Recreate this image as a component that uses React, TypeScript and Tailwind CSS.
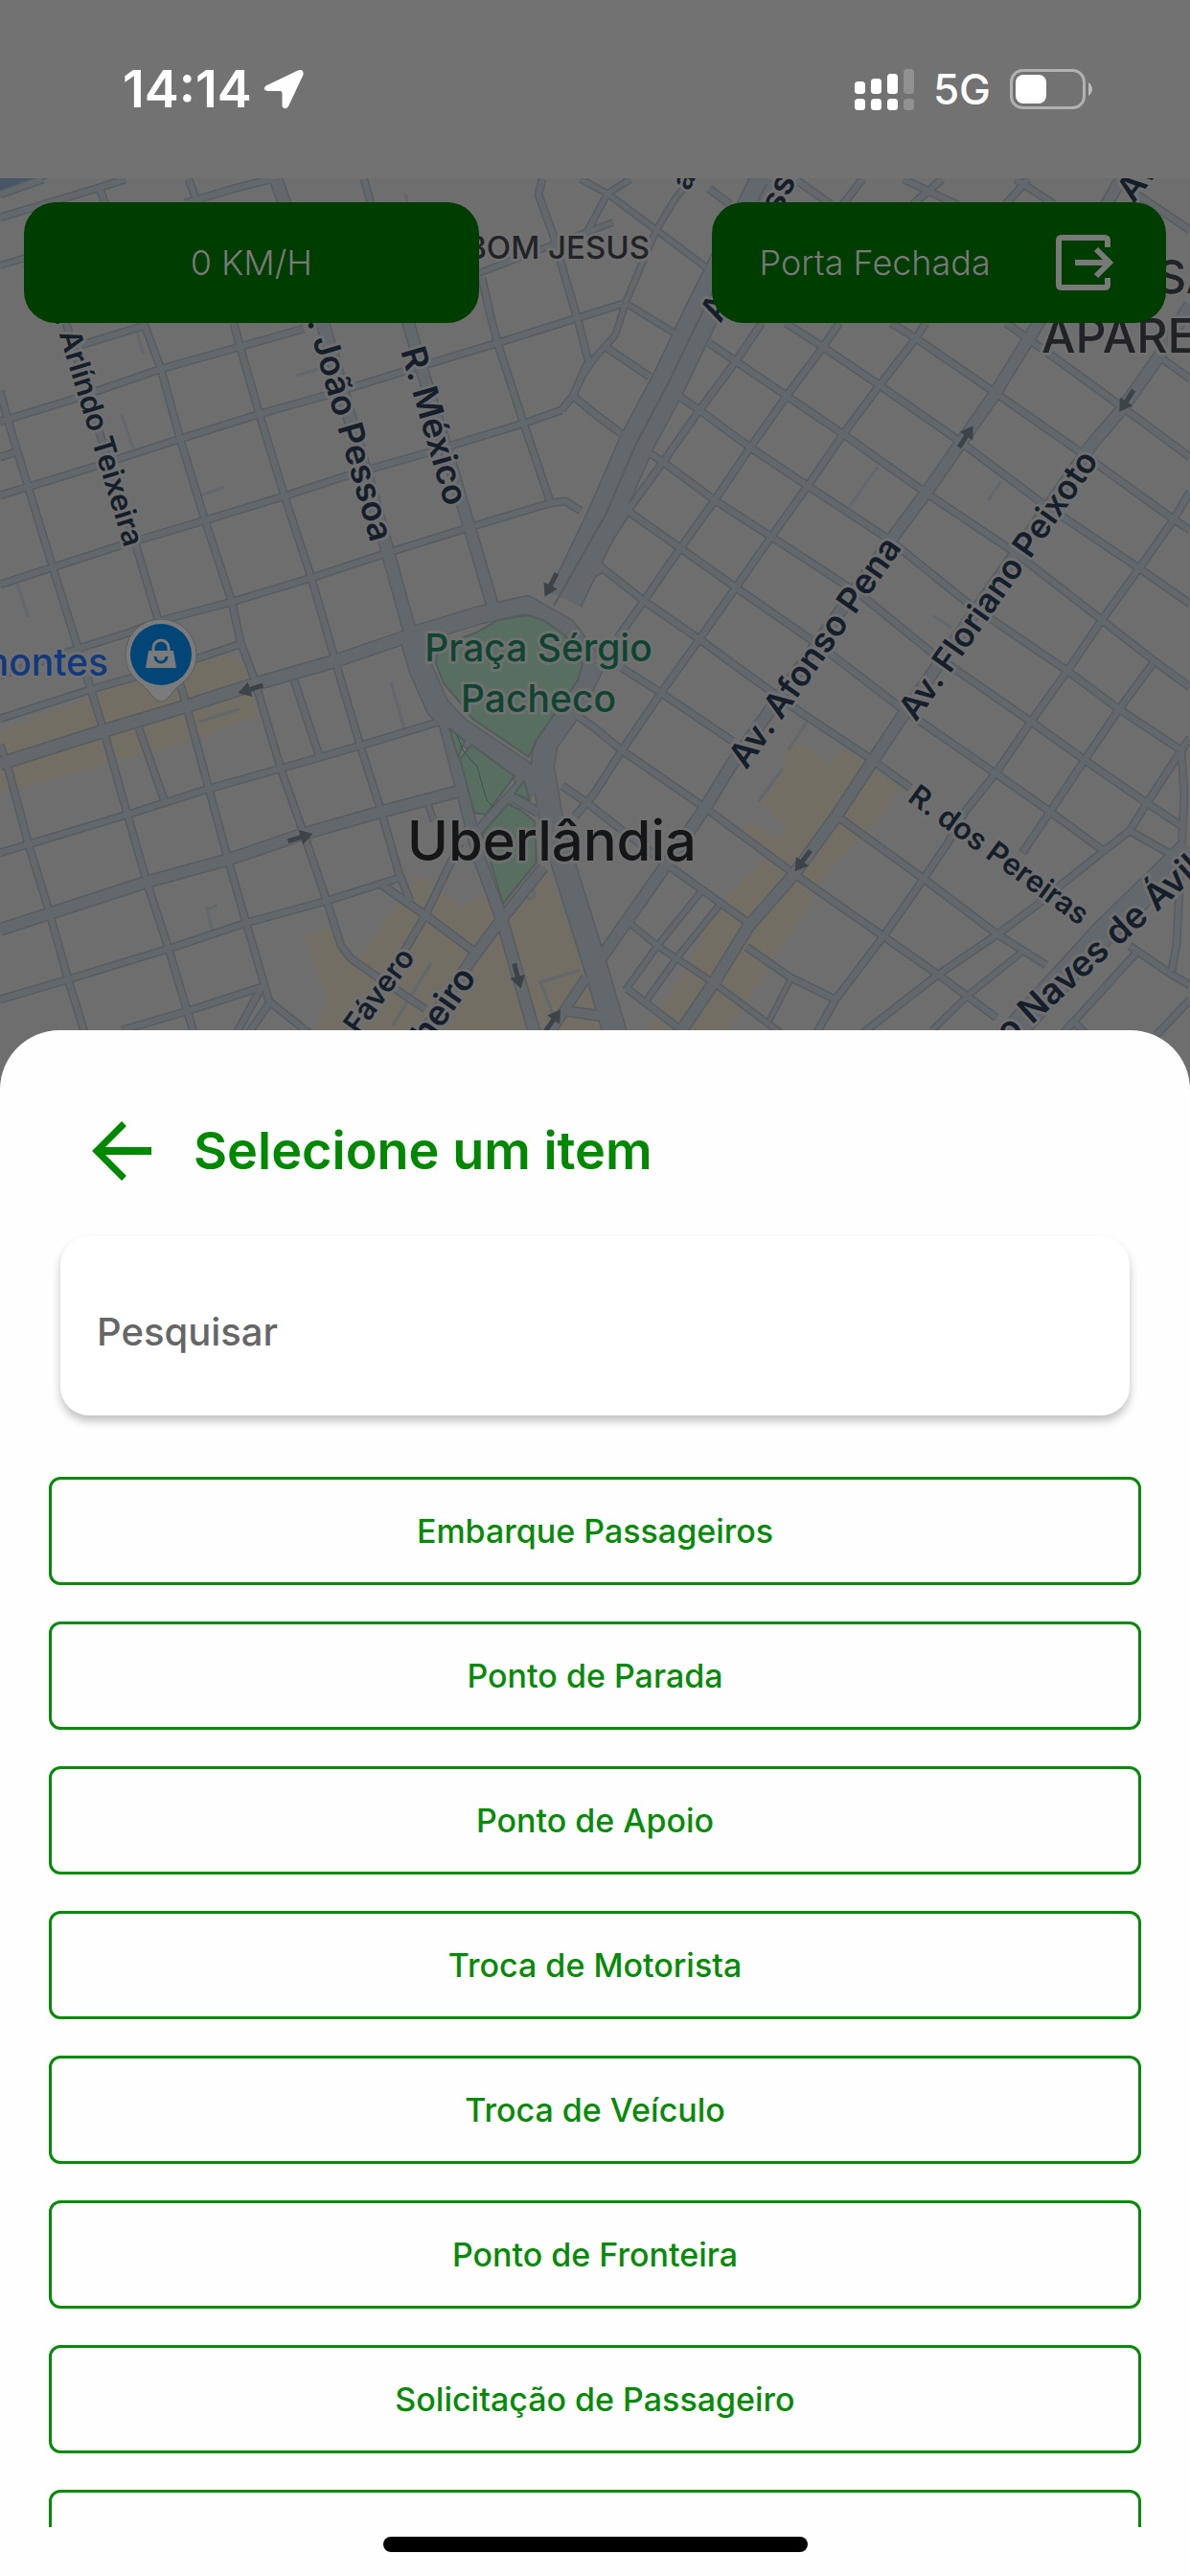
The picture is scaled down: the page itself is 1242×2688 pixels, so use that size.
import React from "react";

type Road = [width: number, points: string];

const ROADS: Road[] = [
  // north-west grid, roads running south
  [7, "0,777 8,800 30,882 51,950 71,1022 89,1080"],
  [7, "0,408 8,438 30,510 55,592 81,675 95,720 109,765 133,850 154,923 176,990 196,1057 203,1080"],
  [7, "69,337 100,440 143,573 166,650 190,720 218,823 238,897 257,963 281,1045 325,1080"],
  [7, "150,337 168,385 188,458 214,543 242,628 251,670 265,707 293,802 317,870 341,940 356,987 366,1000 390,1017 444,1053"],
  [7, "244,337 250,360 271,433 297,518 325,603 350,690 376,778 398,847 416,910 428,940"],
  [7, "503,290 512,330 519,357 546,440 574,523"],
  [7, "566,187 562,203 578,247 590,290 604,337 614,377 598,413 586,428"],
  [7, "598,413 621,432 645,450"],
  [7, "380,187 387,212"],
  [7, "197,187 206,212"],
  [7, "103,193 110,214"],
  [7, "145,760 172,837"],
  [7, "307,710 333,788"],
  [6, "446,837 453,857"],
  // north-west grid, roads running east
  [7, "0,203 45,187"],
  [7, "0,227 103,196 131,187"],
  [7, "193,212 247,196 283,187"],
  [6, "0,277 30,268"],
  [7, "85,360 150,340"],
  [7, "0,440 75,417 168,385 250,362 317,343"],
  [7, "0,477 16,472"],
  [7, "0,517 95,488 188,458 271,432 349,410 420,388 519,358 650,317"],
  [7, "0,610 123,570 214,543 299,517 360,497 444,473 546,442 586,428"],
  [7, "0,705 81,677 135,660 170,647 242,628 325,603 404,577 491,550 574,525 590,523 606,533"],
  [7, "0,750 93,720 135,708 206,687 251,672"],
  [7, "0,890 133,850 218,823 293,802 376,778 459,753"],
  [7, "0,1043 71,1022 176,990 257,963 341,940 420,915"],
  [7, "127,1075 196,1055 273,1030 246,1080"],
  [7, "281,1047 258,1080"],
  [8, "398,923 444,955 495,993"],
  [7, "480,880 444,955 400,1030"],
  // blocks between the two status cards
  [6, "606,187 634,202 685,240 745,285"],
  [6, "658,187 634,202 610,247"],
  [6, "721,187 705,207 685,240 654,313 642,350 621,373 608,392"],
  [6, "654,317 713,353"],
  [6, "500,285 557,263 640,232"],
  // east grid, roads running north-east
  [7, "795,337 768,377 730,428 692,482 655,533 622,585 629,593 603,608"],
  [7, "876,337 859,362 821,413 783,467 746,522 710,572 672,627 645,665"],
  [7, "966,337 956,353 918,402 880,453 843,507 805,560 768,613 730,667 690,723 649,783 621,827 600,852"],
  [7, "1242,513 1225,542 1189,593 1150,647 1114,700 1076,753 1039,807 1007,847 989,880 964,917 922,977 872,1043 851,1080"],
  [7, "1205,690 1168,740 1132,793 1096,847 1067,890"],
  [7, "1242,770 1233,783 1197,838 1179,867 1152,888 1108,923 1084,943 1041,975 979,1017 898,1080"],
  [6, "1067,993 1011,1038 973,1075"],
  [6, "732,930 686,987 653,1033"],
  [6, "752,943 706,1000 674,1045"],
  [5, "825,1022 803,1065"],
  [7, "1233,783 1236,830 1228,985 1223,1013"],
  [7, "1187,993 1108,1080"],
  [7, "1242,1043 1207,1080"],
  // east grid, roads running south-east
  [7, "629,360 678,393"],
  [7, "621,432 649,453"],
  [7, "740,358 768,377 821,413 880,453 966,514 1060,577 1150,647 1205,690 1242,717"],
  [7, "820,337 859,362 918,402 1001,460 1085,523 1189,593 1242,630"],
  [7, "930,337 956,353 1039,410 1125,470 1225,542 1242,553"],
  [7, "1050,337 1096,370 1169,423 1242,477"],
  [7, "1211,373 1242,395"],
  [7, "708,413 730,428 783,467 843,507 928,563 1011,630 1114,700 1168,740 1233,783"],
  [7, "678,473 692,482 746,522 805,560 900,622 975,683 1076,753 1132,793 1197,838 1235,863"],
  [7, "645,527 655,533 710,572 768,613 860,677 942,740 1039,807 1096,847 1152,888"],
  [7, "629,593 672,627 730,667 775,700 835,743 906,790 950,822"],
  [7, "649,697 690,723 764,773"],
  [7, "600,745 621,760 649,783 736,843 829,912 922,977 979,1017 1040,1062"],
  [7, "874,852 964,917 1041,975 1092,1007"],
  [7, "587,820 613,838 650,867 700,905 781,963"],
  [6, "657,963 686,987 706,1000 744,1025 815,1078"],
  [7, "779,988 825,1020 872,1043"],
  [7, "655,1032 715,1078"],
  [7, "1179,867 1223,892"],
  [7, "1179,987 1223,1017 1242,1028"],
  [7, "1120,1065 1134,1080"],
  [7, "830,187 867,213"],
  [7, "900,187 880,213"],
  [7, "943,187 1000,214"],
  [7, "983,187 953,213"],
  [7, "1073,187 1050,213"],
  [7, "1060,187 1100,213"],
  [7, "740,197 762,213"],
  [7, "1163,187 1242,240"],
  // main streets
  [13, "288,187 297,212 337,337 404,573 428,660"],
  [12, "420,315 426,337 489,547 515,635"],
  [13, "0,797 107,763 194,737 269,713 349,690 428,663"],
  [12, "0,970 154,920 238,897 317,870 398,847 481,825"],
  [12, "1170,187 1082,340 1039,410 966,515 930,563 764,797 736,843 692,907 657,957 627,1000"],
  [12, "1242,318 1211,370 1171,427 1140,463 942,747 910,795 874,850 829,912 781,967 744,1027 708,1080"],
  [26, "1242,885 1150,975 1100,1030 1050,1085"],
  // park ring and avenues that meet there
  [36, "802,187 731,330 699,397 664,463 632,537 590,625"],
  [18, "428,664 500,642 550,631 592,655 618,690"],
  [24, "428,660 440,700 457,738 478,760 545,805 562,825"],
  [24, "620,690 600,733 570,775 566,800 578,870 622,1010 644,1085"],
  [12, "463,750 485,835 500,895 523,957 560,1085"],
  [12, "548,815 505,862 495,885"],
  [11, "567,905 523,960 493,1000 440,1080"],
  [9, "535,832 562,848"],
  [10, "612,1020 572,1080"],
  [10, "592,1055 640,1062"],
];

const LANES = [
  "18,610 30,645",
  "127,432 139,468",
  "143,347 150,370",
  "210,517 234,508",
  "309,392 333,385",
  "408,712 422,760",
  "227,945 216,948 222,973",
  "423,203 426,212",
  "208,753 250,740",
  "916,487 884,532",
  "1045,502 1031,522",
  "973,642 993,655",
  "843,752 823,782",
  "817,802 791,837",
  "554,925 559,935 553,938 546,932",
  "606,1012 564,1025 578,1060",
  "450,1005 410,1070",
];

const ARROWS: [x: number, y: number, angle: number][] = [
  [575, 610, 117],
  [262, 719, 163],
  [313, 874, -17],
  [1008, 456, -57],
  [1176, 418, 123],
  [838, 898, 127],
  [540, 1018, 75],
  [577, 1065, -55],
];

type Label = [text: string, x: number, y: number, angle: number, size: number, anchor: "start" | "end"];

const STREETS: Label[] = [
  ["R. Arlíndo Teixeira", 130, 572, 73, 31, "end"],
  ["R. João Pessoa", 387, 567, 74, 36, "end"],
  ["R. México", 418, 366, 74, 36, "start"],
  ["Av. Afonso Pena", 779, 804, -55, 36, "start"],
  ["Av. Floriano Peixoto", 956, 754, -55, 35, "start"],
  ["R. dos Pereiras", 946, 835, 36, 31, "start"],
  ["o Naves de Ávila", 1053, 1091, -42, 37, "start"],
  ["l Fávero", 434, 999, -54, 31, "end"],
  ["Pinheiro", 498, 1020, -55, 36, "end"],
  ["A", 752, 338, -63, 36, "start"],
  ["sso", 814, 224, -64, 36, "start"],
  ["a", 719, 200, -64, 31, "start"],
  ["Av.", 1183, 213, -52, 36, "start"],
];

function CityMap() {
  return (
    <svg
      viewBox="0 186 1242 964"
      preserveAspectRatio="xMidYMin slice"
      className="absolute inset-0 h-full w-full font-[Inter,sans-serif]"
      role="img"
      aria-label="Mapa de Uberlândia"
    >
      <rect x="0" y="186" width="1242" height="964" fill="#6e6e6e" />
      <path d="M0 186H50L0 205Z" fill="#455769" />
      <g fill="#736e64">
        <path d="M0 763 190 692 232 682 255 690 271 747 224 763 222 768 0 827Z" />
        <path d="M436 912 483 947 503 933 523 950 570 903 612 1013 650 1080H325L341 1043 317 977 345 968 356 990 376 1000Z" />
        <path d="M833 773 866 798 880 780 940 822 914 860 866 907 843 947 757 1080H672L732 983 728 970 800 890 775 867 783 857 815 875 821 863 791 838 817 800 821 785Z" />
      </g>
      <g fill="none" stroke="#62686c" strokeWidth="3">
        {LANES.map((points) => (
          <polyline key={points} points={points} />
        ))}
      </g>
      <g fill="none" stroke="#585d61" strokeLinejoin="round">
        {ROADS.map(([width, points]) => (
          <polyline key={points} points={points} strokeWidth={width + 2} />
        ))}
      </g>
      <g fill="none" stroke="#62686c" strokeLinejoin="round">
        {ROADS.map(([width, points]) => (
          <polyline key={points} points={points} strokeWidth={width - 1} />
        ))}
      </g>
      <path d="M800 192 731 330 699 397 664 463 632 537 578 632" fill="none" stroke="#585d61" strokeWidth="2" />
      <g fill="#576e61" stroke="#545d5c" strokeWidth="2" strokeLinejoin="round">
        <path d="M497 660 520 647 550 642 567 647 590 663 608 693 603 710 560 772 552 790 493 750 480 733 463 713 455 693 457 675Z" />
        <path d="M469 760 485 773 478 790ZM492 777 537 810 507 850 495 848 480 792Z" />
        <path d="M547 815 553 835 537 828Z" />
        <path d="M530 839 543 845 558 857 560 900 525 943 503 870Z" />
      </g>
      <path d="M477 767 483 783 498 800 508 835 515 842" fill="none" stroke="#2c5a47" strokeWidth="1" />
      <g fill="#3c4349">
        {ARROWS.map(([x, y, angle]) => (
          <path
            key={`${x}-${y}`}
            d="M-13-2.5H1V-8L14 0 1 8V2.5H-13Z"
            transform={`translate(${x} ${y}) rotate(${angle})`}
          />
        ))}
      </g>
      <g fill="#151f2b" stroke="#707070" strokeWidth="6" strokeLinejoin="round" paintOrder="stroke" fontWeight="500">
        {STREETS.map(([text, x, y, angle, size, anchor]) => (
          <text
            key={text}
            fontSize={size}
            fontWeight="600"
            textAnchor={anchor}
            transform={`translate(${x} ${y}) rotate(${angle})`}
          >
            {text}
          </text>
        ))}
        <g fill="#222326">
          <text x="678" y="270" fontSize="33" textAnchor="end">BOM JESUS</text>
          <text x="1207" y="306" fontSize="48">SANTA</text>
          <text x="1087" y="368" fontSize="50">APARECIDA</text>
        </g>
        <text x="576" y="898" fontSize="58" textAnchor="middle" fill="#151617">Uberlândia</text>
        <g fill="#0f4530" textAnchor="middle" fontSize="39">
          <text x="562" y="690">Praça Sérgio</text>
          <text x="562" y="743">Pacheco</text>
        </g>
        <text x="113" y="705" fontSize="39" textAnchor="end" fill="#12397c">Belmontes</text>
      </g>
      <path
        d="M168 732C162 732 158 724 150 716 138 707 131 698 131 683A37 37 0 0 1 205 683C205 698 198 707 186 716 178 724 174 732 168 732Z"
        fill="#7b7b7b"
        stroke="#5d5d5d"
        strokeWidth="1"
      />
      <circle cx="168" cy="683" r="32" fill="#024678" />
      <path d="M155 679H181L184 697H152Z" fill="#7b7b7b" />
      <path d="M160 680V676A8 8 0 0 1 176 676V680" fill="none" stroke="#7b7b7b" strokeWidth="3" />
      <path d="M162 685A6 6 0 0 0 174 685" fill="none" stroke="#024678" strokeWidth="3" />
    </svg>
  );
}

function StatusBar() {
  return (
    <header className="flex h-[186px] items-start justify-between bg-[#727272] pt-[61px] pr-[102px] pl-[128px] text-white">
      <div className="flex items-center gap-3">
        <time className="text-[54px] leading-[64px] font-semibold">14:14</time>
        <svg viewBox="0 0 42 42" className="h-[42px] w-[42px]" aria-hidden="true">
          <path
            d="M2.500 17.500 36 1.500Q42-.5 41.500 6L26 39Q22.500 43.500 19.500 39V25Q19.500 23 17.500 23H4Q-1.500 21.500 2.500 17.500Z"
            fill="currentColor"
          />
        </svg>
      </div>
      <div className="flex h-16 items-center">
        <svg viewBox="0 0 62 44" className="h-11 w-[62px]" fill="currentColor" aria-hidden="true">
          <rect x="0" y="14" width="11" height="13" rx="3.500" />
          <rect x="17" y="11" width="11" height="16" rx="3.500" />
          <rect x="34" y="6" width="11" height="21" rx="3.500" />
          <rect x="51" y="1" width="11" height="26" rx="3.500" opacity=".22" />
          <rect x="0" y="32" width="11" height="12" rx="3.500" />
          <rect x="17" y="32" width="11" height="12" rx="3.500" />
          <rect x="34" y="32" width="11" height="12" rx="3.500" />
          <rect x="51" y="32" width="11" height="12" rx="3.500" opacity=".22" />
        </svg>
        <span className="ml-5 text-[44px] leading-[64px] font-medium">5G</span>
        <svg viewBox="0 0 86 42" className="ml-5 h-[42px] w-[86px]" aria-hidden="true">
          <rect x="1.500" y="1.500" width="76" height="39" rx="12" fill="none" stroke="#fff" strokeOpacity=".45" strokeWidth="3" />
          <path d="M82 14Q86 17 86 21T82 28Z" fill="#fff" fillOpacity=".5" />
          <rect x="6" y="6" width="32" height="30" rx="8" fill="#fff" />
        </svg>
      </div>
    </header>
  );
}

const ITEMS = [
  "Embarque Passageiros",
  "Ponto de Parada",
  "Ponto de Apoio",
  "Troca de Motorista",
  "Troca de Veículo",
  "Ponto de Fronteira",
  "Solicitação de Passageiro",
];

const itemClass =
  "h-[113px] w-full shrink-0 rounded-xl border-3 border-[#078a07] text-[34px] leading-10 font-medium text-[#078a07]";

export default function App() {
  return (
    <div className="flex h-screen flex-col overflow-hidden bg-[#727272] font-[Inter,sans-serif]">
      <StatusBar />

      <section className="relative h-[964px] shrink-0 overflow-hidden">
        <CityMap />
        <div className="relative grid grid-cols-2 gap-[243px] px-[25px] pt-[25px] text-4xl font-light text-[#797979]">
          <div className="flex h-[126px] items-center justify-center rounded-[33px] bg-[#003d00]">0 KM/H</div>
          <button
            type="button"
            className="flex h-[126px] items-center justify-between rounded-[33px] bg-[#003d00] pr-[55px] pl-[50px]"
          >
            <span>Porta Fechada</span>
            <svg viewBox="0 0 60 58" className="h-[58px] w-[60px]" fill="none" stroke="currentColor" aria-hidden="true">
              <path d="M54 13V6Q54 3 51 3H6Q3 3 3 6V52Q3 55 6 55H51Q54 55 54 52V45" strokeWidth="6" />
              <path d="M20 29H54" strokeWidth="6" />
              <path d="M42 15 56 29 42 43" strokeWidth="6" />
            </svg>
          </button>
        </div>
      </section>

      <main className="relative -mt-[75px] flex min-h-0 flex-1 flex-col rounded-t-[62px] bg-[#fefefe]">
        <div className="flex items-center gap-11 px-24 pt-[95px] pb-[58px]">
          <button type="button" aria-label="Voltar" className="text-[#008800]">
            <svg viewBox="0 0 62 62" className="h-[62px] w-[62px]" fill="none" stroke="currentColor" aria-hidden="true">
              <path d="M62 31H8" strokeWidth="8" />
              <path d="M33.500 2.500 5 31 33.500 59.500" strokeWidth="7" />
            </svg>
          </button>
          <h1 className="text-[54px] leading-[62px] font-semibold text-[#008800]">Selecione um item</h1>
        </div>

        <div className="px-[63px]">
          <input
            type="text"
            aria-label="Pesquisar"
            placeholder="Pesquisar"
            className="block h-[187px] w-full rounded-[30px] bg-white px-[38px] pt-3 text-[40px] font-medium text-[#333] shadow-[0_6px_10px_rgba(0,0,0,0.24)] outline-none placeholder:text-[#666]"
          />
        </div>

        <div className="mt-16 flex min-h-0 flex-1 flex-col gap-[38px] overflow-hidden px-[51px]">
          {ITEMS.map((item) => (
            <button key={item} type="button" className={itemClass}>
              {item}
            </button>
          ))}
          <button type="button" aria-label="Próximo item" className={itemClass} />
        </div>

        <footer className="flex h-[51px] shrink-0 items-start justify-center pt-[10px]">
          <div className="h-4 w-[443px] rounded-full bg-black" />
        </footer>
      </main>
    </div>
  );
}
